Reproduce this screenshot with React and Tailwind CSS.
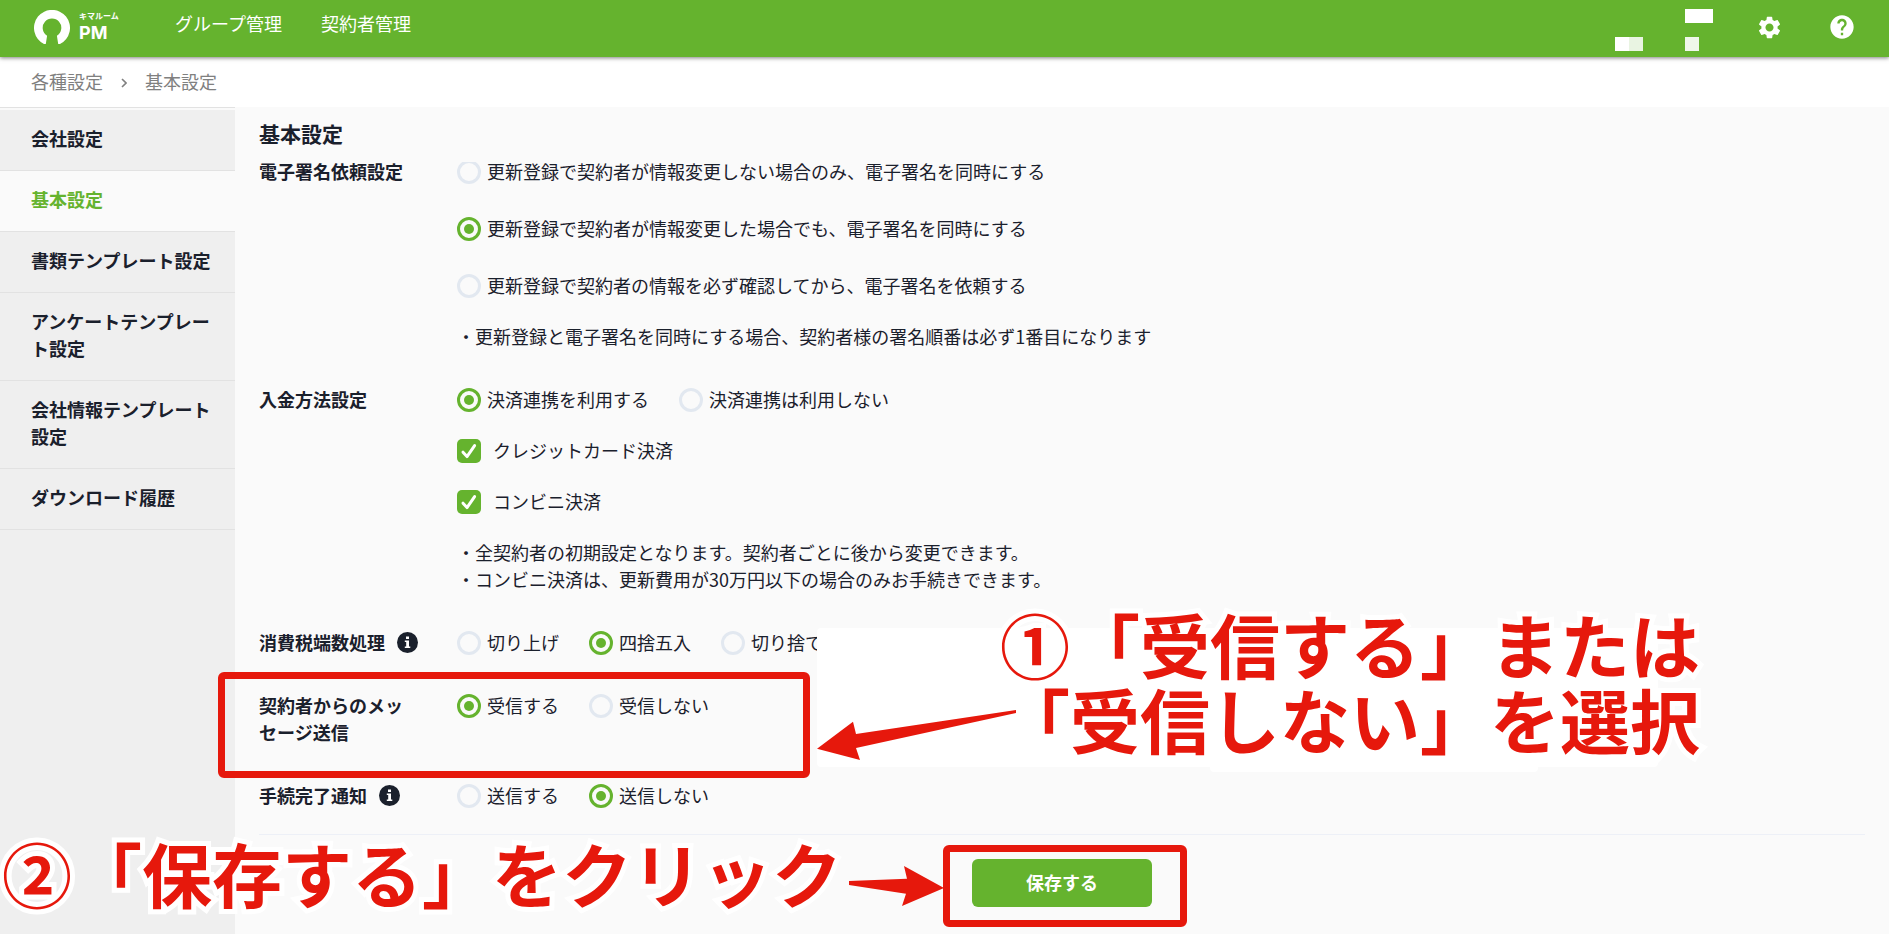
import React, { useState } from "react";
import { MdSettings, MdHelp } from "react-icons/md";

const menuItems = [
  "会社設定",
  "基本設定",
  "書類テンプレート設定",
  "アンケートテンプレート設定",
  "会社情報テンプレート設定",
  "ダウンロード履歴",
];

const signOptions = [
  "更新登録で契約者が情報変更しない場合のみ、電子署名を同時にする",
  "更新登録で契約者が情報変更した場合でも、電子署名を同時にする",
  "更新登録で契約者の情報を必ず確認してから、電子署名を依頼する",
];

const InfoIcon = () => (
  <svg viewBox="0 0 21 21" className="ml-3 h-[21px] w-[21px] shrink-0">
    <circle cx="10.5" cy="10.5" r="10.5" fill="#1a202c" />
    <path
      d="M9 4.5h3v2.6H9zM7.8 8.4H12v6h1.3v1.7H7.8v-1.7h1.4v-4.3H7.8z"
      fill="#fff"
    />
  </svg>
);

const Radio = ({ name, label, checked, onChange }) => (
  <label className="flex h-[27px] cursor-pointer items-center gap-[6px]">
    <input
      type="radio"
      name={name}
      checked={checked}
      onChange={onChange}
      className="peer sr-only"
    />
    <span className="flex h-6 w-6 shrink-0 items-center justify-center rounded-full border-3 border-[#e2e8f0] peer-checked:border-[#65b32e] peer-checked:*:bg-[#65b32e]">
      <span className="h-[10px] w-[10px] rounded-full" />
    </span>
    <span className="whitespace-nowrap">{label}</span>
  </label>
);

const RadioGroup = ({ name, options, initial, className }) => {
  const [value, setValue] = useState(initial);
  return (
    <div role="radiogroup" className={className}>
      {options.map((option, i) => (
        <Radio
          key={option}
          name={name}
          label={option}
          checked={value === i}
          onChange={() => setValue(i)}
        />
      ))}
    </div>
  );
};

const Checkbox = ({ label }) => {
  const [checked, setChecked] = useState(true);
  return (
    <label className="flex h-[27px] cursor-pointer items-center gap-3">
      <input
        type="checkbox"
        checked={checked}
        onChange={() => setChecked(!checked)}
        className="peer sr-only"
      />
      <span className="flex h-6 w-6 shrink-0 items-center justify-center rounded-[5px] bg-[#e2e8f0] peer-checked:bg-[#65b32e]">
        <svg viewBox="0 0 24 24" className="h-6 w-6">
          <path
            d="M6 13.2l4 4.4 7.6-11"
            fill="none"
            stroke="#fff"
            strokeWidth="3"
            strokeLinecap="round"
            strokeLinejoin="round"
          />
        </svg>
      </span>
      <span>{label}</span>
    </label>
  );
};

const Row = ({ label, info, children }) => (
  <div className="flex">
    <div className="mr-[38px] flex w-40 shrink-0 items-center self-start font-bold">
      <span>{label}</span>
      {info ? <InfoIcon /> : null}
    </div>
    <div className="flex flex-col gap-6">{children}</div>
  </div>
);

const Logo = () => (
  <a href="#" className="flex w-[141px] shrink-0 items-center gap-[9px]">
    <svg viewBox="0 0 36 34" className="h-[34px] w-9">
      <path
        d="M10 34A18 18 0 1 1 26 34H24.2L22.9 25.8A9.3 9.3 0 1 0 13.1 25.8L11.8 34Z"
        fill="#fff"
      />
    </svg>
    <span className="flex flex-col font-bold">
      <span className="text-[8px] leading-3">キマルーム</span>
      <span className="font-['Inter',sans-serif] text-[18px] leading-[22px]">
        PM
      </span>
    </span>
  </a>
);

// masked account name
const Masked = () => (
  <div className="mt-[3px] mr-[43px] grid grid-cols-[14px_14px_42px_14px_14px] grid-rows-[14px_14px_14px]">
    <span className="col-span-2 col-start-4 bg-white" />
    <span className="col-start-1 row-start-3 bg-white" />
    <span className="col-start-2 row-start-3 bg-[#e9f4e2]" />
    <span className="col-start-4 row-start-3 bg-[#eff7ea]" />
  </div>
);

const noteText =
  "absolute whitespace-nowrap text-[70px] leading-[75px] font-bold text-[#e6180c] [paint-order:stroke_fill] [-webkit-text-stroke:10px_white] [stroke-linejoin:round]";

const Guide = () => (
  <div className="pointer-events-none absolute inset-0 overflow-hidden">
    <div className="absolute top-[628px] left-[817px] h-[139px] w-[841px] rounded bg-white" />
    <div className="absolute top-[740px] left-[1210px] h-8 w-[328px] rounded bg-white" />
    <div className="absolute top-[672px] left-[218px] h-[106px] w-[592px] rounded-md border-[7px] border-[#e6180c]" />
    <div className="absolute top-[845px] left-[943px] h-[82px] w-[244px] rounded-md border-[7px] border-[#e6180c]" />
    <p className={`${noteText} top-[606px] left-[1000px]`}>
      ①「受信する」または
      <br />
      「受信しない」を選択
    </p>
    <p className={`${noteText} top-[835px] left-[2px]`}>
      ②「保存する」をクリック
    </p>
    <svg
      viewBox="0 0 200 52"
      className="absolute top-[709px] left-[817px] h-[52px] w-[200px]"
    >
      <path d="M0 39.7L36 12.7L39 25L199 1V4L39 39L43 51Z" fill="#e6180c" />
    </svg>
    <svg
      viewBox="0 0 95 40"
      className="absolute top-[866px] left-[849px] h-10 w-[95px]"
    >
      <path d="M95 22L55 0L58 12.7L0 15V19L57 27.7L53 40Z" fill="#e6180c" />
    </svg>
  </div>
);

const App = () => {
  const [active, setActive] = useState("基本設定");

  return (
    <div className="relative flex min-h-screen flex-col bg-[#fafafa] font-['Noto_Sans_CJK_JP',sans-serif] text-lg leading-[27px] text-[#1a202c]">
      <header className="z-10 flex h-[57px] items-center bg-[#65b32e] pl-[34px] text-white shadow-[0_1px_4px_rgba(0,0,0,0.5)]">
        <div className="mb-[3px]">
          <Logo />
        </div>
        <nav className="mb-[10px] flex grow gap-[39px]">
          <a href="#">グループ管理</a>
          <a href="#">契約者管理</a>
        </nav>
        <Masked />
        <div className="mb-[3px] flex items-center gap-[45px] pr-[33px]">
          <button aria-label="設定">
            <MdSettings className="h-[27px] w-[27px]" />
          </button>
          <button aria-label="ヘルプ">
            <MdHelp className="h-7 w-7" />
          </button>
        </div>
      </header>

      <div className="flex h-[50px] items-center bg-white pb-[2px] pl-[31px] text-[#808080]">
        <a href="#">各種設定</a>
        <svg viewBox="0 0 6 10" className="mx-[18px] mt-1 h-[10px] w-[6px]">
          <path
            d="M1 1l4 4-4 4"
            fill="none"
            stroke="currentColor"
            strokeWidth="1.6"
          />
        </svg>
        <a href="#">基本設定</a>
      </div>

      <div className="flex grow">
        <aside className="w-[235px] shrink-0 border-t border-[#e2e2e2] bg-[#efefef] font-bold">
          <ul className="border-t-2 border-[#fafafa]">
            {menuItems.map((item) => (
              <li key={item} className="border-b border-[#e2e2e2]">
                <a
                  href="#"
                  onClick={() => setActive(item)}
                  className={`block pt-[15px] pr-5 pb-[18px] pl-[31px] break-all ${
                    active === item ? "bg-[#fafafa] text-[#65b32e]" : ""
                  }`}
                >
                  {item}
                </a>
              </li>
            ))}
          </ul>
        </aside>

        <main className="grow px-6">
          <h1 className="sticky top-0 z-10 flex h-[55px] items-center bg-[#fafafa] pb-[2px] text-[21px] font-bold">
            基本設定
          </h1>
          <form onSubmit={(e) => e.preventDefault()}>
            <div className="-mt-1 flex flex-col gap-9 pb-[25px]">
              <Row label="電子署名依頼設定">
                <RadioGroup
                  name="sign"
                  options={signOptions}
                  initial={1}
                  className="flex flex-col gap-[30px]"
                />
                <p>
                  ・更新登録と電子署名を同時にする場合、契約者様の署名順番は必ず1番目になります
                </p>
              </Row>
              <Row label="入金方法設定">
                <RadioGroup
                  name="payment"
                  options={["決済連携を利用する", "決済連携は利用しない"]}
                  initial={0}
                  className="flex gap-[30px]"
                />
                <Checkbox label="クレジットカード決済" />
                <Checkbox label="コンビニ決済" />
                <p>
                  ・全契約者の初期設定となります。契約者ごとに後から変更できます。
                  <br />
                  ・コンビニ決済は、更新費用が30万円以下の場合のみお手続きできます。
                </p>
              </Row>
              <Row label="消費税端数処理" info>
                <RadioGroup
                  name="tax"
                  options={["切り上げ", "四捨五入", "切り捨て"]}
                  initial={1}
                  className="flex gap-[30px]"
                />
              </Row>
              <Row label="契約者からのメッセージ送信">
                <RadioGroup
                  name="message"
                  options={["受信する", "受信しない"]}
                  initial={0}
                  className="flex gap-[30px]"
                />
              </Row>
              <Row label="手続完了通知" info>
                <RadioGroup
                  name="notice"
                  options={["送信する", "送信しない"]}
                  initial={1}
                  className="flex gap-[30px]"
                />
              </Row>
            </div>
            <div className="flex justify-center border-t border-[#edf0f7] py-6">
              <button
                type="submit"
                className="h-12 w-[180px] rounded-md bg-[#65b32e] pb-[2px] font-bold text-white"
              >
                保存する
              </button>
            </div>
          </form>
        </main>
      </div>

      <Guide />
    </div>
  );
};

export default App;
